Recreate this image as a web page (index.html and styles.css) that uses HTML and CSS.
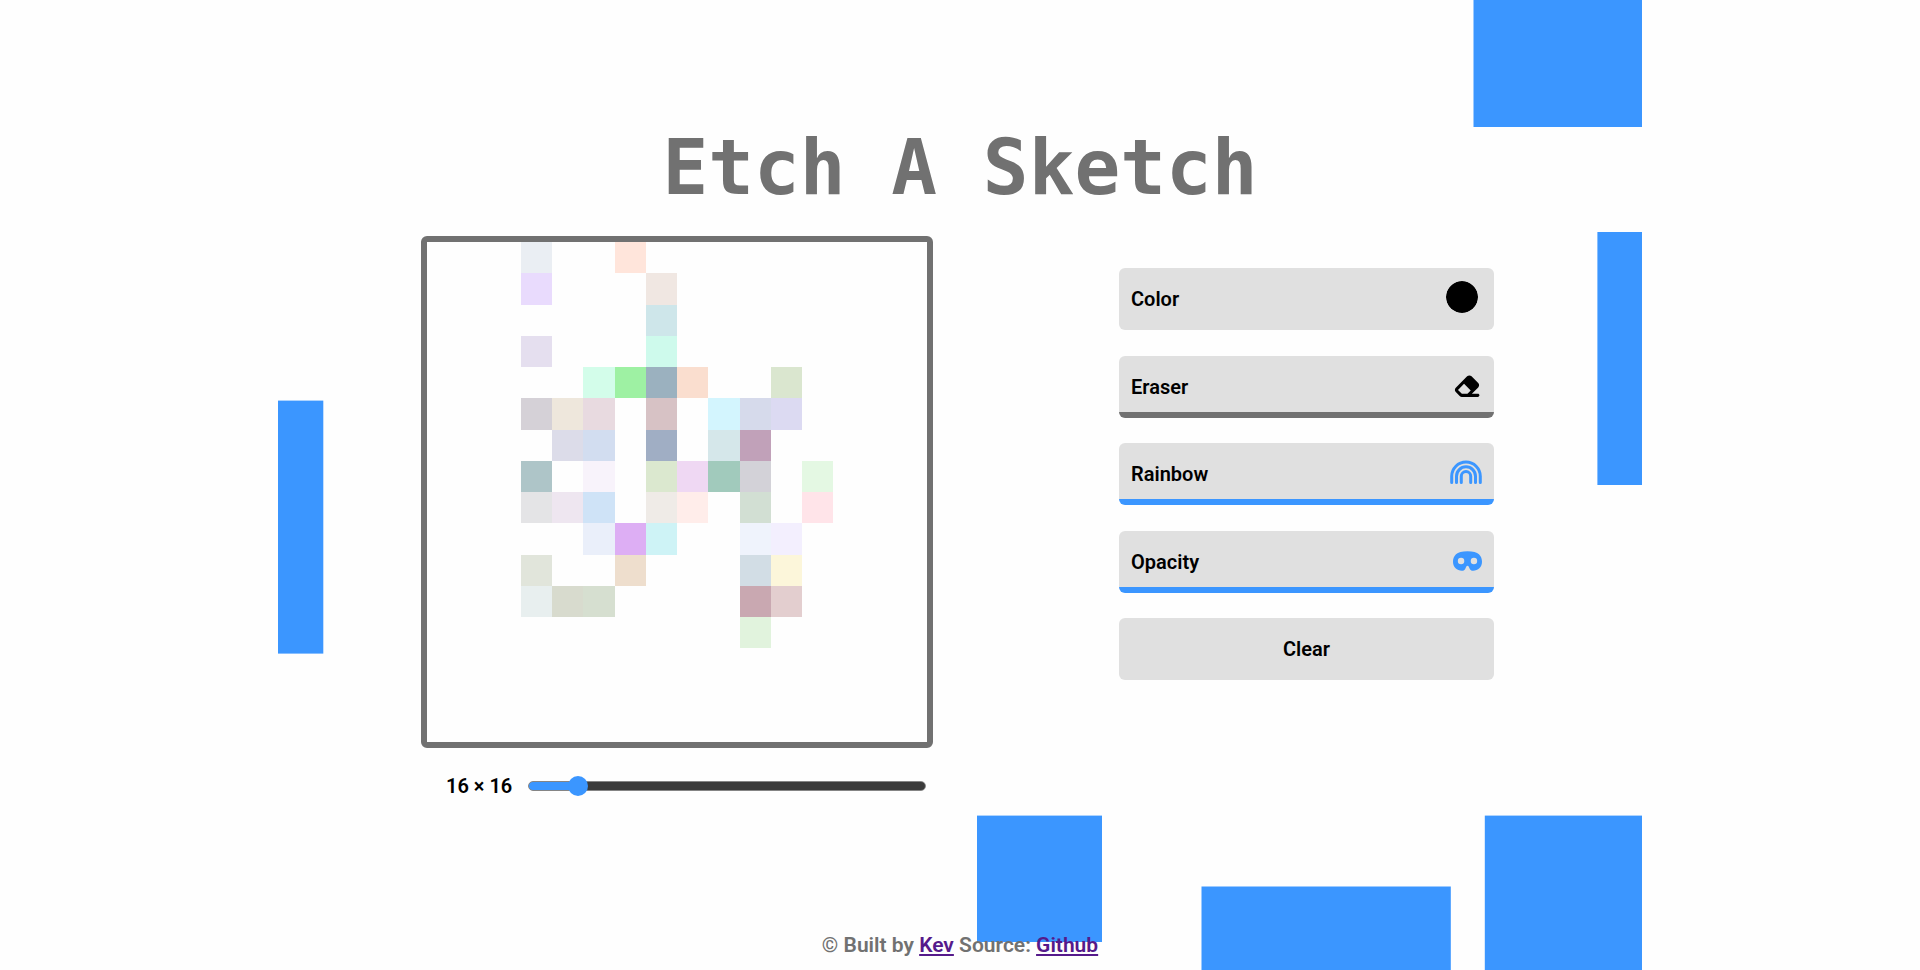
FILE: index.html
```html
<!DOCTYPE html>
<html lang="en">
<head>
<meta charset="utf-8">
<meta name="viewport" content="width=device-width, initial-scale=1">
<title>Etch A Sketch</title>
<link rel="stylesheet" href="styles.css">
</head>
<body>
<div class="page">
  <svg class="backdrop" viewBox="0 0 1364 970" aria-hidden="true">
    <rect x="1195.5" y="0" width="168.5" height="127"/>
    <rect x="1319.4" y="232" width="44.6" height="253"/>
    <rect x="0" y="400.6" width="45.3" height="253"/>
    <rect x="699" y="815.6" width="125" height="126.4"/>
    <rect x="923.5" y="886.5" width="249.3" height="83.5"/>
    <rect x="1206.8" y="815.6" width="157.2" height="154.4"/>
  </svg>

  <header class="header">
    <h1 class="title">Etch A Sketch</h1>
  </header>

  <main class="main">
    <section class="sketch">
      <div class="board" id="board"></div>
      <div class="size">
        <label class="size-label" for="size">16 × 16</label>
        <input class="slider" id="size" type="range" min="4" max="120" value="16">
      </div>
    </section>

    <section class="controls">
      <label class="control" for="color">
        <span>Color</span>
        <input class="swatch" id="color" type="color" value="#000000">
      </label>
      <button class="control control-underlined" type="button">
        <span>Eraser</span>
        <svg class="icon icon-eraser" viewBox="0 0 576 512" aria-hidden="true"><path d="M290.7 57.4L57.4 290.7c-25 25-25 65.5 0 90.5l80 80c12 12 28.3 18.7 45.3 18.7H288h9.4H512c17.7 0 32-14.3 32-32s-14.3-32-32-32H387.9L518.6 285.3c25-25 25-65.5 0-90.5L381.3 57.4c-25-25-65.5-25-90.5 0zM297.4 416H288l-105.4 0-80-80L227.3 211.3 364.7 348.7 297.4 416z"/></svg>
      </button>
      <button class="control control-underlined control-on" type="button">
        <span>Rainbow</span>
        <svg class="icon icon-rainbow" viewBox="0 0 32 26" aria-hidden="true"><path d="M1.7 22.5v-6.2a14.3 14.3 0 0 1 28.6 0v6.2M6.5 22.5v-6.2a9.5 9.5 0 0 1 19 0v6.2M11.3 22.5v-6.2a4.7 4.7 0 0 1 9.4 0v6.2"/></svg>
      </button>
      <button class="control control-underlined control-on" type="button">
        <span>Opacity</span>
        <svg class="icon icon-mask" viewBox="0 0 576 512" aria-hidden="true"><path d="M288 64C64 64 0 160 0 272S80 448 176 448h8.4c24.2 0 46.4-13.7 57.2-35.4l23.2-46.3c4.4-8.8 13.3-14.3 23.2-14.3s18.8 5.5 23.2 14.3l23.2 46.3c10.8 21.7 33 35.4 57.2 35.4H400c96 0 176-64 176-176s-64-208-288-208zM96 256a64 64 0 1 1 128 0A64 64 0 1 1 96 256zm320-64a64 64 0 1 1 0 128 64 64 0 1 1 0-128z"/></svg>
      </button>
      <button class="control control-clear" type="button">Clear</button>
    </section>
  </main>

  <footer class="footer">© Built by <a href="#kev">Kev</a> Source: <a href="#github">Github</a></footer>
</div>
<script src="script.js"></script>
</body>
</html>
```
FILE: styles.css
```css
* {
  box-sizing: border-box;
}

:root {
  --blue: #3b96ff;
  --grey: #717171;
  --panel: #e0e0e0;
}

body {
  margin: 0;
  background: #fefefe;
  color: #000;
  font: 600 20px/24px Roboto, "Liberation Sans", sans-serif;
}

.page {
  position: relative;
  display: flex;
  flex-direction: column;
  min-height: 100vh;
}

.backdrop {
  position: absolute;
  inset: 0;
  width: 100%;
  height: 100%;
  fill: var(--blue);
}

.header,
.main,
.footer {
  position: relative;
}

.header {
  padding: 128px 16px 28px;
}

.title {
  margin: 0;
  color: var(--grey);
  font: 700 76px/80px "DejaVu Sans Mono", monospace;
  text-align: center;
}

.main {
  display: flex;
  flex-wrap: wrap;
  justify-content: space-between;
  width: 100%;
  max-width: 1078px;
  margin: 0 auto;
  padding-right: 5px;
}

.sketch {
  width: 512px;
}

.board {
  display: grid;
  grid-template: repeat(16, 1fr) / repeat(16, 1fr);
  aspect-ratio: 1;
  border: 6px solid var(--grey);
  border-radius: 6px;
}

.size {
  display: flex;
  align-items: center;
  gap: 16px;
  margin-top: 26px;
  padding: 0 7px 0 25px;
}

.slider {
  flex: 1;
  min-width: 0;
  height: 20px;
  margin: 0;
  appearance: none;
  background: none;
}

.slider::-webkit-slider-runnable-track {
  height: 10px;
  border: 1px solid #858585;
  border-radius: 5px;
  background: linear-gradient(to right, var(--blue) 12%, #3b3b3b 12%);
}

.slider::-webkit-slider-thumb {
  width: 20px;
  height: 20px;
  margin-top: -6px;
  appearance: none;
  border-radius: 50%;
  background: var(--blue);
}

.controls {
  display: flex;
  flex-direction: column;
  justify-content: space-between;
  width: 375px;
  height: 412px;
  margin-top: 32px;
}

.control {
  display: flex;
  align-items: center;
  justify-content: space-between;
  width: 100%;
  height: 62px;
  padding: 0 12px;
  border: 0;
  border-radius: 6px;
  background: var(--panel);
  color: inherit;
  font: inherit;
  cursor: pointer;
}

.control-underlined {
  background: linear-gradient(to top, var(--grey) 6px, var(--panel) 6px);
}

.control-on {
  background: linear-gradient(to top, var(--blue) 6px, var(--panel) 6px);
}

.control-clear {
  justify-content: center;
}

.swatch {
  width: 32px;
  height: 32px;
  margin: 0 4px 4px 0;
  padding: 0;
  appearance: none;
  border: 0;
  border-radius: 50%;
  background: none;
  cursor: pointer;
}

.swatch::-webkit-color-swatch-wrapper {
  padding: 0;
}

.swatch::-webkit-color-swatch {
  border: 0;
  border-radius: 50%;
}

.icon {
  height: 26px;
  margin-bottom: 2px;
}

.icon-eraser {
  width: 28px;
  margin-right: 1px;
}

.icon-rainbow {
  width: 32px;
  fill: none;
  stroke: var(--blue);
  stroke-width: 3;
  stroke-linecap: round;
}

.icon-mask {
  width: 29px;
  fill: var(--blue);
}

.footer {
  margin-top: auto;
  padding: 0 16px 13px;
  color: var(--grey);
  font-size: 21px;
  text-align: center;
}

.footer a {
  color: #551a8b;
}
```
FILE: script.js
```js
// Painted cells, one entry per row: column index -> colour.
const painted = [
  { 3: "#eaeef3", 6: "#ffe5db" },
  { 3: "#e9dbfd", 7: "#f0e7e2" },
  { 7: "#cee6ea" },
  { 3: "#e5dfef", 7: "#cefaec" },
  { 5: "#d3fdea", 6: "#9ef1a3", 7: "#9bb1bf", 8: "#fadecf", 11: "#dae6cf" },
  { 3: "#d5d1d7", 4: "#eee7dc", 5: "#e8dae0", 7: "#d7c2c5", 9: "#d3f5fe", 10: "#d6daeb", 11: "#dcdaf2" },
  { 4: "#dcdce9", 5: "#d2ddf0", 7: "#a0aec4", 9: "#d5e7ea", 10: "#c1a1b9" },
  { 3: "#aec5c8", 5: "#f8f3fb", 7: "#dbe8cf", 8: "#efd8f3", 9: "#a1cabc", 10: "#d3d2d8", 12: "#e4f8e3" },
  { 3: "#e4e4e6", 4: "#eee6f0", 5: "#cfe3f7", 7: "#efebe7", 8: "#ffedea", 10: "#d2dfd3", 12: "#ffe4e9" },
  { 5: "#eaeffa", 6: "#ddaef4", 7: "#cef3f6", 10: "#eff3fc", 11: "#f3effe" },
  { 3: "#e1e5db", 6: "#eedecd", 10: "#d2dde5", 11: "#fcf6da" },
  { 3: "#e8efef", 4: "#d8dbce", 5: "#d6dfd0", 10: "#c9a8b1", 11: "#e3cecf" },
  { 10: "#e1f3dd" }
];

const board = document.getElementById("board");
for (let row = 0; row < 16; row++) {
  for (let col = 0; col < 16; col++) {
    const cell = document.createElement("div");
    const color = painted[row] && painted[row][col];
    if (color) cell.style.background = color;
    board.appendChild(cell);
  }
}
```
